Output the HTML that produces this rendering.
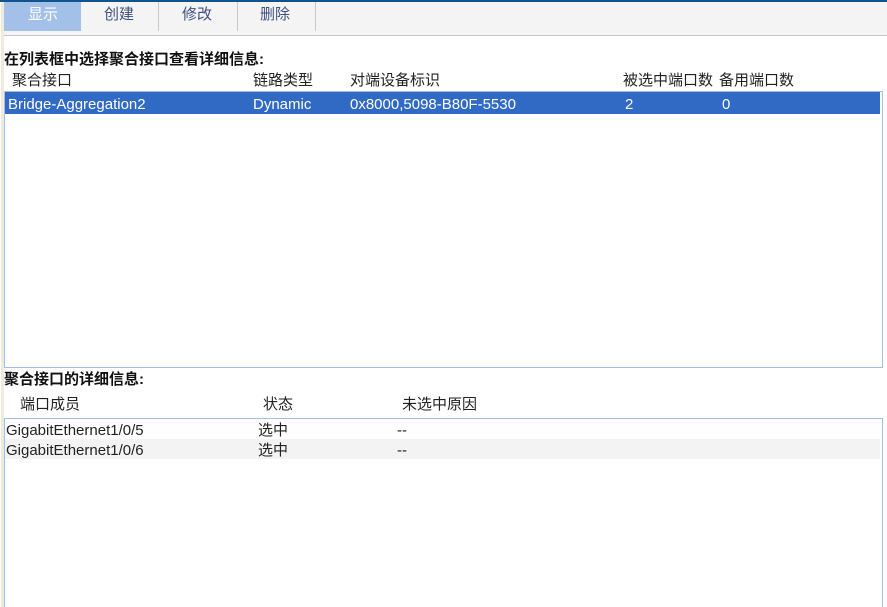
<!DOCTYPE html>
<html lang="zh">
<head>
<meta charset="utf-8">
<style>
html,body{margin:0;padding:0;background:#fff;}
body{width:887px;height:607px;position:relative;overflow:hidden;font-family:"Liberation Sans","Microsoft YaHei","Noto Sans CJK SC",sans-serif;font-size:15px;color:#222;}
.a{position:absolute;box-sizing:border-box;}
.t{position:absolute;white-space:nowrap;line-height:20px;height:20px;}
.b{font-weight:bold;color:#111;}
.w{color:#fff;}
.tab{color:#3d4f80;}
</style>
</head>
<body>
<div class="a" style="left:0;top:0;width:887px;height:2px;background:#10548f;"></div>
<div class="a" style="left:1px;top:2px;width:3px;height:605px;background:#efeadb;"></div>
<div class="a" style="left:4px;top:2px;width:883px;height:33px;background:#f4f4f4;"></div>
<div class="a" style="left:4px;top:35px;width:883px;height:1px;background:#c8c8c8;"></div>
<div class="a" style="left:4px;top:2px;width:77px;height:29px;background:#a3c0e9;"></div>
<div class="a" style="left:158px;top:2px;width:1px;height:29px;background:#c8c8c8;"></div>
<div class="a" style="left:237px;top:2px;width:1px;height:29px;background:#c8c8c8;"></div>
<div class="a" style="left:315px;top:2px;width:1px;height:29px;background:#c8c8c8;"></div>
<div class="t w" style="left:28px;top:5px;">显示</div>
<div class="t tab" style="left:104px;top:5px;">创建</div>
<div class="t tab" style="left:182px;top:5px;">修改</div>
<div class="t tab" style="left:260px;top:5px;">删除</div>

<div class="t b" style="left:4px;top:50px;">在列表框中选择聚合接口查看详细信息:</div>
<div class="t" style="left:12px;top:71px;">聚合接口</div>
<div class="t" style="left:253px;top:71px;">链路类型</div>
<div class="t" style="left:350px;top:71px;">对端设备标识</div>
<div class="t" style="left:623px;top:71px;">被选中端口数</div>
<div class="t" style="left:719px;top:71px;">备用端口数</div>

<div class="a" style="left:4px;top:91px;width:879px;height:277px;border:1px solid #a3bfe6;"></div>
<div class="a" style="left:5px;top:92px;width:875px;height:22px;background:#316ac5;"></div>
<div class="t w" style="left:8px;top:95px;">Bridge-Aggregation2</div>
<div class="t w" style="left:253px;top:95px;">Dynamic</div>
<div class="t w" style="left:350px;top:95px;">0x8000,5098-B80F-5530</div>
<div class="t w" style="left:625px;top:95px;">2</div>
<div class="t w" style="left:722px;top:95px;">0</div>

<div class="t b" style="left:4px;top:370px;">聚合接口的详细信息:</div>
<div class="t" style="left:20px;top:395px;">端口成员</div>
<div class="t" style="left:263px;top:395px;">状态</div>
<div class="t" style="left:402px;top:395px;">未选中原因</div>

<div class="a" style="left:4px;top:418px;width:879px;height:189px;border:1px solid #a3bfe6;border-bottom:0;"></div>
<div class="a" style="left:5px;top:439px;width:875px;height:20px;background:#f3f3f3;"></div>
<div class="t" style="left:6px;top:421px;">GigabitEthernet1/0/5</div>
<div class="t" style="left:258px;top:421px;">选中</div>
<div class="t" style="left:397px;top:421px;">--</div>
<div class="t" style="left:6px;top:441px;">GigabitEthernet1/0/6</div>
<div class="t" style="left:258px;top:441px;">选中</div>
<div class="t" style="left:397px;top:441px;">--</div>
</body>
</html>
